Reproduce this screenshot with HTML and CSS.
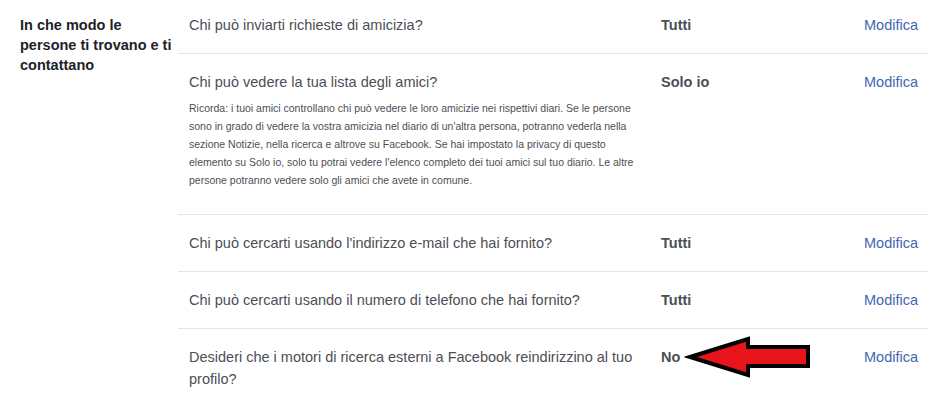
FILE: index.html
```html
<!DOCTYPE html>
<html>
	<head>
		<meta charset="UTF-8">
		<title>Privacy</title>
		<link rel="stylesheet" href="styles.css">
	</head>
	<body>
		<div id="box">
			<h3 class="title">In che modo le persone ti trovano e ti contattano</h3>

			<ul class="list">
				<li class="first">
					<div class="ask">Chi può inviarti richieste di amicizia?</div>
					<div class="val">Tutti</div>
					<a href="#" class="edit">Modifica</a>
				</li>
				<li class="long">
					<div class="ask">
						Chi può vedere la tua lista degli amici?
						<p class="note">Ricorda: i tuoi amici controllano chi può vedere le loro amicizie nei rispettivi diari. Se le persone sono in grado di vedere la vostra amicizia nel diario di un'altra persona, potranno vederla nella sezione Notizie, nella ricerca e altrove su Facebook. Se hai impostato la privacy di questo elemento su Solo io, solo tu potrai vedere l'elenco completo dei tuoi amici sul tuo diario. Le altre persone potranno vedere solo gli amici che avete in comune.</p>
					</div>
					<div class="val">Solo io</div>
					<a href="#" class="edit">Modifica</a>
				</li>
				<li>
					<div class="ask">Chi può cercarti usando l'indirizzo e-mail che hai fornito?</div>
					<div class="val">Tutti</div>
					<a href="#" class="edit">Modifica</a>
				</li>
				<li>
					<div class="ask">Chi può cercarti usando il numero di telefono che hai fornito?</div>
					<div class="val">Tutti</div>
					<a href="#" class="edit">Modifica</a>
				</li>
				<li>
					<div class="ask">Desideri che i motori di ricerca esterni a Facebook reindirizzino al tuo profilo?</div>
					<div class="val">No
						<!--freccia rossa-->
						<svg class="arrow" width="130" height="48" viewBox="0 0 130 48">
							<polygon points="6,24 64,6 64,14 124,14 124,33 64,33 64,42" fill="#e8141c" stroke="#000" stroke-width="4" stroke-linejoin="miter"/>
						</svg>
					</div>
					<a href="#" class="edit">Modifica</a>
				</li>
			</ul>
		</div>
	</body>
</html>
```

FILE: styles.css
```css
*{
	margin: 0;
	padding: 0;
}
ul,li{
	list-style: none;
}

a{
	text-decoration: none;
}

body{
	background-color: #fff;
	font-family: "Liberation Sans", Arial, sans-serif;
}

#box{
	display: flex;
	width: 928px;
}

#box .title{
	width: 158px;
	padding: 15px 0 0 20px;
	font-size: 14.5px;
	line-height: 20px;
	font-weight: bold;
	color: #1d2129;
}

#box .list{
	flex: 1;
}

#box .list li{
	display: flex;
	align-items: flex-start;
	padding: 17px 10px 17px 11px;
	border-top: 1px solid #e5e6e9;
	font-size: 14.5px;
	line-height: 22px;
	color: #4b4f56;
}

#box .list li.first{
	padding-top: 14px;
	border-top: none;
}

#box .list li.long{
	padding-bottom: 25px;
}

#box .ask{
	width: 448px;
	padding-right: 24px;
}

#box .note{
	margin-top: 6px;
	font-size: 10.5px;
	line-height: 18px;
	color: #4b4f56;
}

#box .val{
	position: relative;
	flex: 1;
	font-weight: bold;
}

#box .arrow{
	position: absolute;
	left: 23px;
	top: -13px;
}

#box .edit{
	color: #4267b2;
}
```
